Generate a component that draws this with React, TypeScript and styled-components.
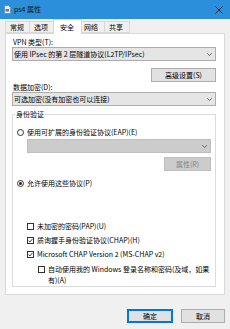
import React from 'react';
import styled, { createGlobalStyle } from 'styled-components';

const Global = createGlobalStyle`
  html, body { margin: 0; padding: 0; }
  body {
    width: 230px;
    height: 329px;
    overflow: hidden;
    background: #f0f0f0;
    font-family: "Noto Sans CJK SC", "Noto Sans", sans-serif;
    font-size: 7px;
    line-height: 9px;
    color: #000;
  }
  * { box-sizing: border-box; }
`;

const Window = styled.div`
  width: 230px;
  height: 329px;
  display: flex;
  flex-direction: column;
  background: #f0f0f0;
`;

const TitleBar = styled.div`
  height: 19px;
  flex: none;
  background: #2b8fdc;
  display: flex;
  align-items: center;
  padding: 0 7px 0 4px;
  gap: 3px;
`;

const Title = styled.span`
  flex: 1;
  color: #111;
`;

const TabStrip = styled.div`
  height: 14px;
  flex: none;
  display: flex;
  align-items: flex-end;
  padding-left: 5px;
`;

const Tab = styled.div<{ $active?: boolean }>`
  width: ${p => (p.$active ? 29 : 25)}px;
  height: ${p => (p.$active ? 15 : 12)}px;
  margin: 0 ${p => (p.$active ? -2 : 0)}px ${p => (p.$active ? -1 : 0)}px;
  padding-left: ${p => (p.$active ? 6 : 4)}px;
  display: flex;
  align-items: center;
  border: 1px solid #d9d9d9;
  border-bottom: ${p => (p.$active ? 'none' : '1px solid #d9d9d9')};
  border-left-width: ${p => (p.$active ? 1 : 0)}px;
  background: ${p => (p.$active ? '#fff' : '#f0f0f0')};
  position: relative;
  z-index: ${p => (p.$active ? 2 : 1)};
  &:first-child { border-left-width: 1px; }
`;

const Panel = styled.div`
  height: 262px;
  flex: none;
  margin: 0 5px;
  border: 1px solid #d9d9d9;
  background: #fff;
  padding: 4px 8px 0 6px;
  display: flex;
  flex-direction: column;
`;

const Label = styled.div<{ $top?: number }>`
  margin-top: ${p => p.$top ?? 0}px;
  height: 9px;
  padding-left: 1px;
`;

const Select = styled.div<{ $disabled?: boolean; $inset?: number; $top?: number }>`
  height: 14px;
  margin-left: ${p => p.$inset ?? 0}px;
  margin-top: ${p => p.$top ?? 0}px;
  border: 1px solid ${p => (p.$disabled ? '#bfbfbf' : '#adadad')};
  background: ${p => (p.$disabled ? '#cccccc' : '#e5e5e5')};
  display: flex;
  align-items: center;
  justify-content: space-between;
  padding: 0 3px 0 1px;
  color: ${p => (p.$disabled ? '#8c8c8c' : '#000')};
`;

const ButtonRow = styled.div<{ $top: number }>`
  display: flex;
  justify-content: flex-end;
  margin-top: ${p => p.$top}px;
  gap: 8px;
`;

const Button = styled.div<{ $w: number; $primary?: boolean; $disabled?: boolean }>`
  width: ${p => p.$w}px;
  height: 14px;
  display: flex;
  align-items: center;
  justify-content: center;
  border: 1px solid ${p => (p.$primary ? '#0078d7' : p.$disabled ? '#bfbfbf' : '#adadad')};
  box-shadow: ${p => (p.$primary ? 'inset 0 0 0 1px #0078d7' : 'none')};
  background: ${p => (p.$disabled ? '#cccccc' : '#e1e1e1')};
  color: ${p => (p.$disabled ? '#838383' : '#000')};
`;

const Group = styled.fieldset`
  margin: 4px 0 0 0;
  height: 177px;
  border: 1px solid #dcdcdc;
  padding: 0 4px 0 4px;
  display: flex;
  flex-direction: column;
  min-width: 0;
`;

const Legend = styled.legend`
  padding: 0 1px;
  margin-left: -2px;
  line-height: 9px;
`;

const Option = styled.div<{ $top?: number; $inset?: number }>`
  display: flex;
  align-items: flex-start;
  gap: 3px;
  margin-top: ${p => p.$top ?? 0}px;
  margin-left: ${p => p.$inset ?? 0}px;
  line-height: 9px;
`;

const Radio = styled.span<{ $on?: boolean }>`
  width: 7px;
  height: 7px;
  margin-top: 1px;
  flex: none;
  border-radius: 50%;
  border: 1px solid #333;
  display: flex;
  align-items: center;
  justify-content: center;
  &::after {
    content: '';
    width: 3px;
    height: 3px;
    border-radius: 50%;
    background: ${p => (p.$on ? '#222' : 'transparent')};
  }
`;

const Box = styled.span`
  width: 7px;
  height: 7px;
  margin-top: 1px;
  flex: none;
  border: 1px solid #333;
  background: #fff;
  display: flex;
  align-items: center;
  justify-content: center;
`;

const Wrapped = styled.span`
  line-height: 11px;
  margin-top: -1px;
`;

const Footer = styled.div`
  display: flex;
  justify-content: flex-end;
  padding: 14px 5px 0 0;
  gap: 8px;
`;

const Chevron = () => (
  <svg width="5" height="3" viewBox="0 0 5 3">
    <path d="M0.3 0.3 L2.5 2.5 L4.7 0.3" fill="none" stroke="#444" strokeWidth="0.8" />
  </svg>
);

const Check = () => (
  <svg width="5" height="5" viewBox="0 0 5 5">
    <path d="M0.5 2.6 L1.9 4 L4.5 0.9" fill="none" stroke="#222" strokeWidth="0.9" />
  </svg>
);

const CheckBox = ({ on }: { on?: boolean }) => <Box>{on && <Check />}</Box>;

const AppIcon = () => (
  <svg width="7" height="9" viewBox="0 0 7 9">
    <path d="M0.5 0.5 H4.5 L6.5 2.5 V8.5 H0.5 Z" fill="#e8eef5" stroke="#6b7f95" strokeWidth="0.7" />
    <rect x="1.5" y="4" width="3.5" height="2.5" fill="#4a7fb8" />
  </svg>
);

const CloseIcon = () => (
  <svg width="8" height="8" viewBox="0 0 8 8">
    <path d="M0.5 0.5 L7.5 7.5 M7.5 0.5 L0.5 7.5" stroke="#1a1a1a" strokeWidth="0.9" />
  </svg>
);

const tabs = ['常规', '选项', '安全', '网络', '共享'];

export default function App() {
  return (
    <>
      <Global />
      <Window>
        <TitleBar>
          <AppIcon />
          <Title>ps4 属性</Title>
          <CloseIcon />
        </TitleBar>
        <TabStrip>
          {tabs.map(t => (
            <Tab key={t} $active={t === '安全'}>{t}</Tab>
          ))}
        </TabStrip>
        <Panel>
          <Label>VPN 类型(T):</Label>
          <Select>
            <span>使用 IPsec 的第 2 层隧道协议(L2TP/IPsec)</span>
            <Chevron />
          </Select>
          <ButtonRow $top={7}>
            <Button $w={65}>高级设置(S)</Button>
          </ButtonRow>
          <Label $top={1}>数据加密(D):</Label>
          <Select>
            <span>可选加密(没有加密也可以连接)</span>
            <Chevron />
          </Select>
          <Group>
            <Legend>身份验证</Legend>
            <Option $top={9}>
              <Radio />
              <span>使用可扩展的身份验证协议(EAP)(E)</span>
            </Option>
            <Select $disabled $inset={10} $top={2}>
              <span />
              <Chevron />
            </Select>
            <ButtonRow $top={4}>
              <Button $w={47} $disabled>属性(R)</Button>
            </ButtonRow>
            <Option $top={8}>
              <Radio $on />
              <span>允许使用这些协议(P)</span>
            </Option>
            <Option $top={34} $inset={10}>
              <CheckBox />
              <span>未加密的密码(PAP)(U)</span>
            </Option>
            <Option $top={5} $inset={10}>
              <CheckBox on />
              <span>质询握手身份验证协议(CHAP)(H)</span>
            </Option>
            <Option $top={5} $inset={10}>
              <CheckBox on />
              <span>Microsoft CHAP Version 2 (MS-CHAP v2)</span>
            </Option>
            <Option $top={6} $inset={21}>
              <CheckBox />
              <Wrapped>
                自动使用我的 Windows 登录名称和密码(及域，如果
                <br />
                有)(A)
              </Wrapped>
            </Option>
          </Group>
        </Panel>
        <Footer>
          <Button $w={46} $primary>确定</Button>
          <Button $w={44}>取消</Button>
        </Footer>
      </Window>
    </>
  );
}
